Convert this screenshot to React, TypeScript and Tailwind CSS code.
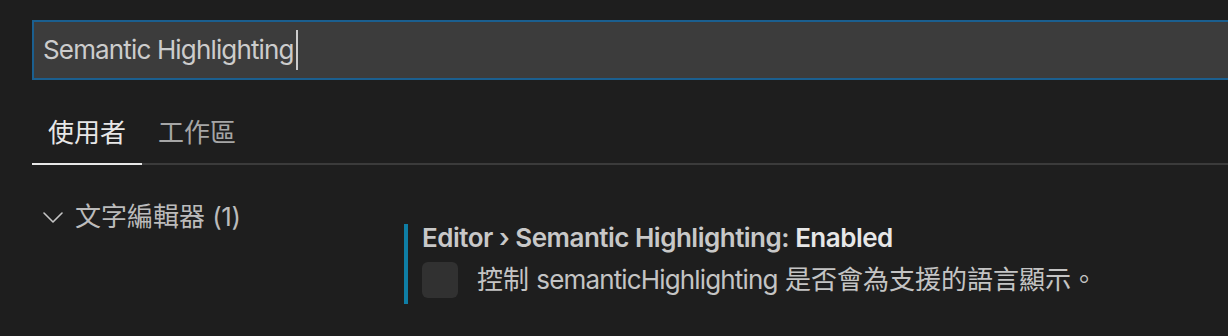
import React from 'react';

const font = { fontFamily: "Inter, 'Noto Sans CJK TC', sans-serif" };

function Chevron() {
  return (
    <svg width="20" height="11" viewBox="0 0 20 11" fill="none">
      <polyline
        points="1,1 10,10 19,1"
        stroke="#c5c5c5"
        strokeWidth="1.6"
        strokeLinecap="round"
        strokeLinejoin="round"
      />
    </svg>
  );
}

export default function App() {
  return (
    <div
      className="w-[1228px] h-[336px] overflow-hidden bg-[#1e1e1e] pt-[20px] pl-[32px] text-[26px] text-[#cccccc]"
      style={font}
    >
      {/* SEARCH */}
      <div className="h-[60px] flex items-center border-2 border-r-0 border-[#1b5f8f] bg-[#3c3c3c] pl-[9px]">
        <span className="leading-[36px] text-[#cccccc] tracking-[-0.85px]">Semantic Highlighting</span>
        <span className="w-[2px] h-[40px] bg-[#cccccc] ml-[2px]" />
      </div>

      {/* TABS */}
      <div className="flex mt-[35px] border-b-2 border-[#3b3b3b]">
        <div className="px-[16px] pb-[12px] leading-[36px] text-[#e7e7e7] border-b-2 border-[#e7e7e7] -mb-[2px]">
          使用者
        </div>
        <div className="px-[16px] pb-[12px] leading-[36px] text-[#a6a6a6]">
          工作區
        </div>
      </div>

      {/* CONTENT */}
      <div className="flex">
        <div className="w-[372px] shrink-0 pt-[34px]">
          <div className="flex items-center pl-[11px] gap-[12px] leading-[36px] text-[#bbbbbb]">
            <Chevron />
            <span>
              文字編輯器 <span className="tracking-[-0.5px]">(1)</span>
            </span>
          </div>
        </div>

        <div className="mt-[59px] border-l-4 border-[#0f7ea5] pl-[14px] pb-[6px]">
          <div className="leading-[28px] font-semibold text-[#c8c8c8] tracking-[-0.5px]">
            Editor › Semantic Highlighting: <span className="text-[#e7e7e7]">Enabled</span>
          </div>
          <div className="flex items-center mt-[10px] gap-[19px]">
            <div className="w-[36px] h-[36px] rounded-[6px] bg-[#313131] shrink-0" />
            <span className="leading-[36px] text-[#c4c4c4]">
              控制 <span className="tracking-[-0.85px]">semanticHighlighting</span> 是否會為支援的語言顯示。
            </span>
          </div>
        </div>
      </div>
    </div>
  );
}
